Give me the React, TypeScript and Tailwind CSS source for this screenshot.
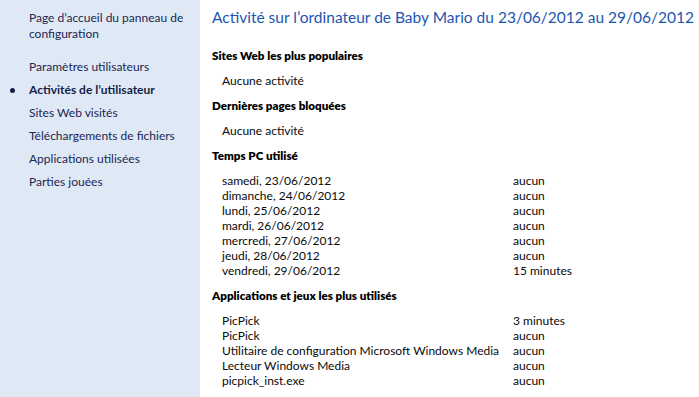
import React from 'react';

const navItems = [
  { label: 'Paramètres utilisateurs' },
  { label: 'Activités de l’utilisateur', active: true },
  { label: 'Sites Web visités' },
  { label: 'Téléchargements de fichiers' },
  { label: 'Applications utilisées' },
  { label: 'Parties jouées' },
];

const pcTime = [
  ['samedi, 23/06/2012', 'aucun'],
  ['dimanche, 24/06/2012', 'aucun'],
  ['lundi, 25/06/2012', 'aucun'],
  ['mardi, 26/06/2012', 'aucun'],
  ['mercredi, 27/06/2012', 'aucun'],
  ['jeudi, 28/06/2012', 'aucun'],
  ['vendredi, 29/06/2012', '15 minutes'],
];

const apps = [
  ['PicPick', '3 minutes'],
  ['PicPick', 'aucun'],
  ['Utilitaire de configuration Microsoft Windows Media', 'aucun'],
  ['Lecteur Windows Media', 'aucun'],
  ['picpick_inst.exe', 'aucun'],
];

const SectionTitle: React.FC<{ children: React.ReactNode }> = ({ children }) => (
  <h2 className="font-extrabold text-[11.6px] leading-[16px] text-black">{children}</h2>
);

const Table: React.FC<{ rows: string[][] }> = ({ rows }) => (
  <div className="mt-[9px] pl-[10px] flex flex-col">
    {rows.map(([a, b], i) => (
      <div key={i} className="flex leading-[15px] h-[15px]">
        <span className="w-[291px] shrink-0 whitespace-nowrap">{a}</span>
        <span className="whitespace-nowrap">{b}</span>
      </div>
    ))}
  </div>
);

export default function App() {
  return (
    <div
      className="w-[699px] h-[397px] flex overflow-hidden bg-white text-[12px] text-[#0a0a0a]"
      style={{ fontFamily: '"Segoe UI", Lato, sans-serif' }}
    >
      {/* Sidebar */}
      <aside className="w-[200px] shrink-0 bg-[#dfe9f5] text-[#1a2554] pt-[10px]">
        <div className="pl-[29px] pr-2 leading-[16px]">
          Page d’accueil du panneau de configuration
        </div>
        <ul className="mt-[17px] flex flex-col">
          {navItems.map(item => (
            <li
              key={item.label}
              className={`relative pl-[29px] h-[23px] leading-[16px] ${item.active ? 'font-bold text-[#141e4a]' : ''}`}
            >
              {item.active && (
                <span className="absolute left-[10px] top-[6px] w-[5px] h-[5px] rounded-full bg-[#141e4a]" />
              )}
              {item.label}
            </li>
          ))}
        </ul>
      </aside>

      {/* Main */}
      <main className="flex-1 pl-[12px] pt-[6px]">
        <h1 className="text-[15.5px] leading-[22px] text-[#1c56b0] whitespace-nowrap">
          Activité sur l’ordinateur de Baby Mario du 23/06/2012 au 29/06/2012
        </h1>

        <div className="mt-[20px]">
          <SectionTitle>Sites Web les plus populaires</SectionTitle>
          <p className="mt-[9px] pl-[10px] leading-[15px]">Aucune activité</p>
        </div>

        <div className="mt-[10px]">
          <SectionTitle>Dernières pages bloquées</SectionTitle>
          <p className="mt-[9px] pl-[10px] leading-[15px]">Aucune activité</p>
        </div>

        <div className="mt-[10px]">
          <SectionTitle>Temps PC utilisé</SectionTitle>
          <Table rows={pcTime} />
        </div>

        <div className="mt-[10px]">
          <SectionTitle>Applications et jeux les plus utilisés</SectionTitle>
          <Table rows={apps} />
        </div>
      </main>
    </div>
  );
}
